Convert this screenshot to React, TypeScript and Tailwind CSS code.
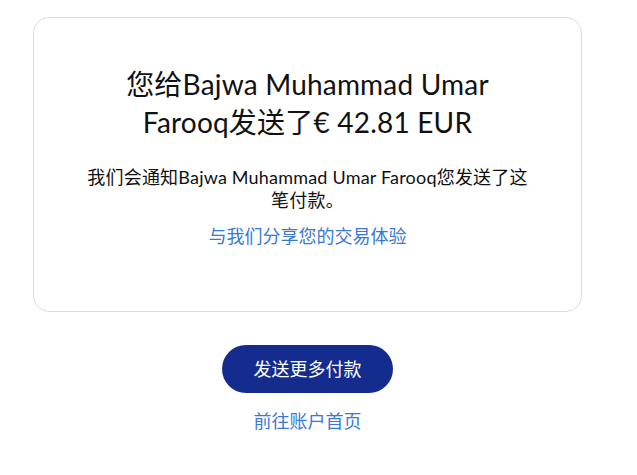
export default function App() {
  const font = { fontFamily: 'Lato, "Noto Sans CJK SC", sans-serif' };

  return (
    <div className="min-h-[475px] w-[615px] bg-white px-[33px] pt-[17px]" style={font}>
      <div className="rounded-2xl border border-[#dcdcdc] bg-white px-[40px] pb-[62px] pt-[47px] text-center">
        <h1 className="mx-auto max-w-[400px] text-[28px] leading-[38px] font-normal tracking-[0.2px] text-[#111111]">
          您给Bajwa Muhammad Umar Farooq发送了€ 42.81 EUR
        </h1>
        <p className="mx-auto mt-[25px] max-w-[448px] text-[18px] leading-[23px] tracking-[0.2px] text-[#111111]">
          我们会通知Bajwa Muhammad Umar Farooq您发送了这笔付款。
        </p>
        <a href="#" className="mt-[12px] inline-block text-[18px] leading-[25px] text-[#3a78d3]">
          与我们分享您的交易体验
        </a>
      </div>

      <div className="flex flex-col items-center pt-[33px]">
        <button
          type="button"
          className="h-[48px] w-[171px] rounded-full bg-[#142c8e] text-[18px] text-white"
        >
          发送更多付款
        </button>
        <a href="#" className="mt-[16px] text-[18px] leading-[25px] text-[#3a78d3]">
          前往账户首页
        </a>
      </div>
    </div>
  );
}
